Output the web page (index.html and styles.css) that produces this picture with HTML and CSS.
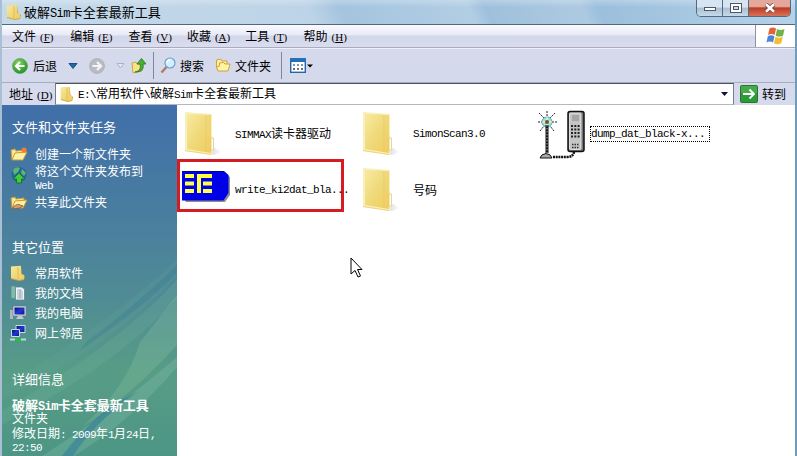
FILE: index.html
```html
<!DOCTYPE html>
<html lang="zh-CN">
<head>
  <meta charset="UTF-8" />
  <title>破解Sim卡全套最新工具</title>
  <link rel="stylesheet" href="styles.css">
</head>
<body>

  <!-- Shared icons -->
  <svg class="defs" width="0" height="0">
    <defs>
      <linearGradient id="gold" x1="0" y1="0" x2="1" y2="1">
        <stop offset="0" stop-color="#f8eaa0"/>
        <stop offset=".5" stop-color="#efd97a"/>
        <stop offset="1" stop-color="#f2cc5c"/>
      </linearGradient>
      <linearGradient id="shade" x1="0" y1="0" x2="1" y2="0">
        <stop offset="0" stop-color="#b9bcc8"/>
        <stop offset="1" stop-color="#fff"/>
      </linearGradient>
      <radialGradient id="green" cx=".4" cy=".3" r=".8">
        <stop offset="0" stop-color="#83d467"/>
        <stop offset="1" stop-color="#168a1c"/>
      </radialGradient>
      <linearGradient id="screen" x1="0" y1="0" x2="1" y2="1">
        <stop offset="0" stop-color="#000e78"/>
        <stop offset=".5" stop-color="#2038d0"/>
        <stop offset="1" stop-color="#0a168c"/>
      </linearGradient>
      <symbol id="folder" viewBox="0 0 48 48">
        <path d="M18 41l14 4 8-3-7-4z" fill="url(#shade)"/>
        <path d="M3 2l27 2v22l1 2v13l-2 4L3 41z" fill="#f9efb8"/>
        <path d="M5 4l24 1v38L5 39z" fill="url(#gold)"/>
        <path d="M24 5v37" stroke="#e3ca69" stroke-width=".7"/>
        <path d="M3 40.500l26 4" stroke="#efd57f" stroke-width="1"/>
        <path d="M29 28h2.500v12H29z" fill="#fffdf0" stroke="#dcc678" stroke-width=".7"/>
      </symbol>
      <symbol id="folder-small" viewBox="0 0 16 16">
        <path d="M1 2l10-1 1 8 3 2-1 4-5 1-8-2z" fill="#cba64b"/>
        <path d="M1 1.500l10-.8v8.300l3 1v4L9 15l-8-2z" fill="url(#gold)"/>
        <path d="M8 2v12" stroke="#dcb75a" stroke-width=".8"/>
      </symbol>
      <symbol id="folder-open" viewBox="0 0 18 16">
        <path d="M2 14L1 4l4-1 1 2 8-1v3" fill="#f8e69a" stroke="#c79a34"/>
        <path d="M2 14l3-7 12-1-4 8z" fill="#fff0a8" stroke="#c79a34"/>
      </symbol>
    </defs>
  </svg>

  <div class="window">

    <div class="title-bar">
      <svg class="title-icon" width="16" height="16"><use href="#folder-small"/></svg>
      <span class="title-text">破解<span class="en">Sim</span>卡全套最新工具</span>
      <div class="controls">
        <div class="control min"><svg width="14" height="8" viewBox="0 0 14 8"><rect x="1.500" y="3.500" width="11" height="3" fill="#fff" stroke="#4a5a6c"/></svg></div>
        <div class="control max"><svg width="12" height="10" viewBox="0 0 12 10"><rect x=".5" y=".5" width="11" height="9" fill="#fff" stroke="#4a5a6c"/><rect x="3.500" y="3.500" width="5" height="3" fill="#cbd9e6" stroke="#4a5a6c"/></svg></div>
        <div class="control close"><svg width="12" height="10" viewBox="0 0 12 10"><path d="M2 1.200l8 7.600M10 1.200L2 8.800" stroke="#6b3030" stroke-width="4"/><path d="M2 1.200l8 7.600M10 1.200L2 8.800" stroke="#fff" stroke-width="2.600"/></svg></div>
      </div>
    </div>

    <div class="menu-bar">
      <div class="menu">
        <span>文件<span class="key">(<u>F</u>)</span></span>
        <span>编辑<span class="key">(<u>E</u>)</span></span>
        <span>查看<span class="key">(<u>V</u>)</span></span>
        <span>收藏<span class="key">(<u>A</u>)</span></span>
        <span>工具<span class="key">(<u>T</u>)</span></span>
        <span>帮助<span class="key">(<u>H</u>)</span></span>
      </div>
      <div class="flag">
        <svg width="20" height="18" viewBox="0 0 20 18">
          <path d="M3.500 1.500q3-2 6.500 0L8.700 8q-3.500-1.800-6.700 0z" fill="#e8603a"/>
          <path d="M11 2q3.500 1.800 7.500 0L17 8.700q-4 1.800-7.300 0z" fill="#72b347"/>
          <path d="M1.800 9.200q3.200-2 6.700 0L7 15.500q-3-2-6.500 0z" fill="#4a86d8"/>
          <path d="M9.500 9.800q3.500 1.800 7.300 0l-1.500 6.500q-4 1.700-7.300 0z" fill="#f4bd34"/>
        </svg>
      </div>
    </div>

    <div class="toolbar">
      <svg class="back" width="16" height="16" viewBox="0 0 16 16">
        <circle cx="8" cy="8" r="7.500" fill="url(#green)" stroke="#4c9b40" stroke-width=".6"/>
        <path d="M12.500 8H4.500M8 4L4 8l4 4" fill="none" stroke="#fff" stroke-width="2.200"/>
      </svg>
      <span class="back-text">后退</span>
      <svg class="drop" width="10" height="6" viewBox="0 0 10 6"><path d="M1 .5h8L5 5.500z" fill="#1d6aa5" stroke="#1a4f86"/></svg>
      <svg class="forward" width="16" height="16" viewBox="0 0 16 16">
        <circle cx="8" cy="8" r="7.500" fill="#b9bbc3" stroke="#a5a7b0" stroke-width=".6"/>
        <path d="M3.500 8h8M8 4l4 4-4 4" fill="none" stroke="#f4f4fa" stroke-width="2.200"/>
      </svg>
      <svg class="drop2" width="9" height="6" viewBox="0 0 9 6"><path d="M1 .5h7L4.500 5z" fill="#e4e7f4" stroke="#a9b3c8"/></svg>
      <svg class="up" width="15" height="16" viewBox="0 0 15 16">
        <path d="M1 5l4-1 1 2 5 0v7l-9 2z" fill="#f8e388" stroke="#cfa545"/>
        <path d="M4 14c5-1 6-4 5-8H6l4.500-5.500L15 6h-3c1 5-1 8-8 8z" fill="#4caf35" stroke="#23761d" stroke-width=".8"/>
      </svg>
      <i class="divider"></i>
      <svg class="search" width="16" height="17" viewBox="0 0 16 17">
        <path d="M1.500 15.500L6.500 10" stroke="#b5785c" stroke-width="2.400"/>
        <circle cx="10" cy="6" r="5" fill="#d4effc" stroke="#6e9ed2" stroke-width="1.200"/>
        <path d="M7 6q0-3 3-3" fill="none" stroke="#fff" stroke-width="1.500"/>
      </svg>
      <span class="search-text">搜索</span>
      <svg class="folders" width="16" height="15" viewBox="0 0 16 15">
        <path d="M1.500 10V2l4-1 1.500 2h5v3" fill="#fbeea0" stroke="#d0a23a"/>
        <path d="M3 13L1.500 9l3-1V5l4-.5L10 6h5l-2 7z" fill="#fff3a5" stroke="#d0a23a"/>
      </svg>
      <span>文件夹</span>
      <i class="divider second"></i>
      <svg class="views" width="16" height="15" viewBox="0 0 16 15">
        <rect x=".7" y=".7" width="14.600" height="13.600" fill="#fff" stroke="#2465a8" stroke-width="1.400"/>
        <path d="M0 0h16v4H0z" fill="#2670b5"/>
        <path d="M3 6h2v2H3zM7 6h2v2H7zM11 6h2v2h-2z" fill="#7d9bb4"/>
        <path d="M3 10h2v2H3zM11 10h2v2h-2z" fill="#4b768e"/><path d="M7 10h2v2H7z" fill="#a6684c"/>
      </svg>
      <svg width="6" height="4" viewBox="0 0 6 4"><path d="M0 .5h6L3 3.500z" fill="#000"/></svg>
    </div>

    <div class="address-bar">
      <span class="address-label">地址<span class="key">(<u>D</u>)</span></span>
      <div class="address">
        <svg width="14" height="16" viewBox="0 0 16 16" preserveAspectRatio="none"><use href="#folder-small"/></svg>
        <span class="path"><span class="en">E:\</span>常用软件<span class="en">\</span>破解<span class="en">Sim</span>卡全套最新工具</span>
        <svg class="address-drop" width="7" height="4" viewBox="0 0 7 4"><path d="M0 0h7L3.500 4z" fill="#10103c"/></svg>
      </div>
      <svg class="go" width="18" height="18" viewBox="0 0 18 18">
        <rect x=".5" y=".5" width="17" height="17" rx="1" fill="#2c9a38" stroke="#2b7434"/>
        <path d="M1 1h16v7H1z" fill="#58b65a" opacity=".6"/>
        <path d="M3 9h11M9.500 4.500L14 9l-4.500 4.500" fill="none" stroke="#fff" stroke-width="1.800"/>
      </svg>
      <span>转到</span>
    </div>

    <div class="content">
      <div class="sidebar">
        <svg class="swoosh" width="175" height="351" viewBox="0 0 175 351">
          <path d="M175 155Q105 220 0 282v13Q110 240 175 171z" fill="#6aa8a0" opacity=".18"/>
          <path d="M175 175Q110 245 0 305v15Q120 256 175 193z" fill="#78b79e" opacity=".2"/>
          <path d="M175 160Q130 204 85 236l-8 10q60-40 98-78z" fill="#29738f" opacity=".25"/>
          <path d="M138 237L175 190v50q-45 50-95 82 45-40 58-85z" fill="#8cc7a0" opacity=".28"/>
          <path d="M175 252Q120 300 40 351h32Q130 315 175 262z" fill="#8fc8b5" opacity=".25"/>
          <path d="M135 287Q95 305 60 351h11q20-32 64-64z" fill="#25729d" opacity=".45"/>
        </svg>

        <h3>文件和文件夹任务</h3>
        <ul class="tasks">
          <li>
            <svg width="18" height="16" viewBox="0 0 18 16"><use href="#folder-open"/><circle cx="14" cy="4" r="2.600" fill="#f27d35"/></svg>
            <span>创建一个新文件夹</span>
          </li>
          <li class="publish">
            <svg width="18" height="18" viewBox="0 0 18 18">
              <circle cx="9" cy="8.500" r="7.500" fill="#24669d"/>
              <path d="M3 4q3-4 7-2l-2 4-4 3zM12 3l4 4-2 3-3-3z" fill="#5bb869"/>
              <path d="M9 7l6 6h-3.500v4h-5v-4H3z" fill="#41c83e" stroke="#126a27" stroke-width=".8"/>
            </svg>
            <span>将这个文件夹发布到<br><span class="en">Web</span></span>
          </li>
          <li>
            <svg width="18" height="16" viewBox="0 0 18 16"><use href="#folder-open"/><path d="M3 13q5-4 7-2l3 1-3 2-7 1z" fill="#d99c65" stroke="#744d2d" stroke-width=".7"/></svg>
            <span>共享此文件夹</span>
          </li>
        </ul>

        <h3>其它位置</h3>
        <ul class="places">
          <li>
            <svg width="16" height="16"><use href="#folder-small"/></svg>
            <span>常用软件</span>
          </li>
          <li>
            <svg width="16" height="16" viewBox="0 0 16 16">
              <path d="M1 1h5v13l-5-1z" fill="#7fbda9" stroke="#58887f" stroke-width=".6"/>
              <path d="M5.500 2h6l3 2v11h-9z" fill="#f1f5f7" stroke="#668090" stroke-width=".8"/>
              <path d="M7 5h5M7 7h6M7 9h6M7 11h6M7 13h6M10 5v8" stroke="#8ca1af" stroke-width=".8"/>
            </svg>
            <span>我的文档</span>
          </li>
          <li>
            <svg width="16" height="16" viewBox="0 0 16 16">
              <path d="M0 5h3v9H0z" fill="#aeb8c0"/>
              <path d="M3 1h13v10H3z" fill="#d9dcdf" stroke="#676f80" stroke-width=".6"/>
              <path d="M4.500 2.500h10v7h-10z" fill="url(#screen)"/>
              <path d="M8 11h4l2 3H6z" fill="#c2c8cc"/>
            </svg>
            <span>我的电脑</span>
          </li>
          <li>
            <svg width="16" height="16" viewBox="0 0 16 16">
              <path d="M6 .5h9v7H6z" fill="url(#screen)" stroke="#d2d9e5"/>
              <path d="M1.500 4.500h8v7h-8z" fill="url(#screen)" stroke="#d2d9e5"/>
              <path d="M0 14.500h16" stroke="#b9d9d5" stroke-width="2"/><path d="M5 14.500h6" stroke="#26bd4a" stroke-width="3"/>
            </svg>
            <span>网上邻居</span>
          </li>
        </ul>

        <h3>详细信息</h3>
        <div class="details">
          <b>破解<span class="en">Sim</span>卡全套最新工具</b>
          <p>文件夹</p>
          <p class="date">修改日期<span class="en">: 2009</span>年<span class="en">1</span>月<span class="en">24</span>日<span class="en">,<br>22:50</span></p>
        </div>
      </div>

      <div class="files">
        <div class="file">
          <svg width="48" height="48"><use href="#folder"/></svg>
          <span class="name"><span class="en">SIMMAX</span>读卡器驱动</span>
        </div>
        <div class="file">
          <svg width="48" height="48"><use href="#folder"/></svg>
          <span class="name en">SimonScan3.0</span>
        </div>
        <div class="file">
          <svg width="48" height="48" viewBox="0 0 48 48">
            <path d="M9 1v8M9 16v6M1 3l5 5M17 3l-5 5M0 12h4M14 12h5M2 21l4-5M16 21l-4-5" stroke="#222" stroke-dasharray="2 1"/>
            <circle cx="9" cy="12" r="5" fill="#a9ded8" stroke="#55a8a3"/>
            <path d="M9 7v10M4 12h10" stroke="#e2ffff"/>
            <circle cx="9" cy="12" r="2" fill="#72541c"/>
            <path d="M9 15v28" stroke="#111" stroke-width="3"/>
            <path d="M9 15v28" stroke="#aaa" stroke-dasharray="1.500 1.500"/>
            <path d="M15 47h14q6 0 7-5" fill="none" stroke="#111" stroke-width="2.500" stroke-dasharray="2 .7"/>
            <path d="M2 48q1-4 6-4.500 5 .5 6 4.500z" fill="#aaa" stroke="#111"/>
            <rect x="30" y="1.500" width="16" height="40" rx="2" fill="#777" stroke="#111" stroke-width="1.500"/>
            <rect x="31.500" y="3" width="11.500" height="36.500" rx="1" fill="#c5c5c5" stroke="#eee" stroke-width=".8"/>
            <path d="M34 6h7M34 8h7M34 10h7" stroke="#777" stroke-width=".8"/>
            <path d="M33 16h9.500M33 19.500h9.500M33 23h9.500M33 26.500h9.500" stroke="#222" stroke-width="2" stroke-dasharray="2 1.300"/>
            <path d="M34 34.500h7M34 37.500h7" stroke="#333" stroke-width="1.500" stroke-dasharray="1.500 1"/>
          </svg>
          <span class="name en focused">dump_dat_black-x...</span>
        </div>
        <div class="file marked">
          <svg width="48" height="48" viewBox="0 0 48 48">
            <path d="M2 7h41l5 4v18l-5 7H4l-2-3z" fill="#8b8b91"/>
            <path d="M0 5h42l4.500 4v18l-5 7.500H0z" fill="#0000e8"/>
            <path d="M0 5.500h42" stroke="#000092"/>
            <path d="M3 8h9v4H3zM3 15.500h9v4H3zM3 23h9v4H3zM15 8h15v4H19v15h-4zM21 15.500h9v4h-9zM21 23h9v4h-9z" fill="#ffff4a"/>
          </svg>
          <span class="name en">write_ki2dat_bla...</span>
        </div>
        <div class="file">
          <svg width="48" height="48"><use href="#folder"/></svg>
          <span class="name">号码</span>
        </div>

        <svg class="cursor" width="14" height="22" viewBox="0 0 14 22">
          <path d="M1 1v16l4-3.500L8 20l2.500-1-3-6.500H12z" fill="#fff" stroke="#000"/>
        </svg>
      </div>
    </div>
  </div>

</body>
</html>
```
FILE: styles.css
```css
body {
  margin: 0;
  font-family: "Noto Sans CJK SC", sans-serif;
  font-size: 12px;
  line-height: 14px;
  color: #000;
}

.defs {
  position: absolute;
}

.window {
  display: flex;
  flex-direction: column;
  box-sizing: border-box;
  width: 797px;
  height: 456px;
  overflow: hidden;
  border-left: 2px solid #a9bfd3;
  border-right: 2px solid #6f9cba;
  background: #d6daed;
}

svg {
  display: block;
  flex-shrink: 0;
}

/* half-width latin letters, 6px each */
.en {
  font-family: "Liberation Mono", monospace;
  font-size: 11px;
  letter-spacing: -0.6px;
}

.key {
  margin-left: 4px;
  font-family: "Liberation Serif", serif;
  font-size: 11px;
}

/* title bar */
.title-bar {
  display: flex;
  height: 24px;
  padding-left: 4px;
  background: linear-gradient(to bottom, rgba(255,255,255,0.25), rgba(255,255,255,0) 30%),
    linear-gradient(65deg, #c4d9ea 0, #bdd3e7 39%, #a4c4df 43%, #b2cee4 59%, #9fc0dc 61%, #adcae1 73%, #9bbfdc 75%, #b6d2e7 100%);
  border-bottom: 1px solid #54677b;
}

.title-icon {
  margin-top: 4px;
}

.title-text {
  margin: 5px 0 0 2px;
  font-size: 13px;
}

.title-text .en,
.details b .en {
  font-size: 12px;
}

.controls {
  display: flex;
  width: 93px;
  height: 16px;
  margin: 0 4px 0 auto;
  border: 1px solid #536b82;
  border-top: none;
  border-radius: 0 0 5px 5px;
  overflow: hidden;
}

.control {
  display: flex;
  align-items: center;
  justify-content: center;
  width: 25px;
  border-right: 1px solid #536b82;
  background: linear-gradient(#d7e5f0 45%, #a9bed1 50%, #c6dbe9);
}

.close {
  flex: 1;
  border-right: none;
  background: linear-gradient(#e4a79b 40%, #bd3b2a 50%, #d97156);
}

/* menu */
.menu-bar {
  display: flex;
  justify-content: space-between;
  height: 22px;
  background: linear-gradient(#fafaff, #e8eaf7 45%, #d2d6e9 50%, #d9ddef);
  border-bottom: 1px solid #a9adbb;
}

.menu {
  display: flex;
  padding: 4px 0 0 10px;
}

.menu > span {
  width: 58.300px;
  white-space: nowrap;
}

.flag {
  display: flex;
  align-items: center;
  justify-content: center;
  width: 39px;
  background: #fff;
  border-left: 1px solid #8d91a0;
}

/* toolbar */
.toolbar {
  display: flex;
  align-items: center;
  height: 33px;
  padding-left: 10px;
  border-top: 1px solid #eef0f9;
  border-bottom: 1px solid #a9adbb;
  background: #d5d9ec;
}

.back-text { margin-left: 5px; }
.drop { margin-left: 11px; }
.forward { margin-left: 11px; }
.drop2 { margin-left: 11px; }
.up { margin-left: 6px; }

.divider {
  width: 1px;
  height: 27px;
  margin: 0 6px 0 7px;
  background: #82869a;
}

.search-text { margin-left: 4px; }
.folders { margin: 0 4px 0 11px; }
.divider.second { margin: 0 8px 0 10px; }
.views { margin-right: 1px; }

/* address */
.address-bar {
  display: flex;
  align-items: center;
  height: 22px;
  padding-left: 7px;
}

.address-label {
  width: 46px;
  white-space: nowrap;
}

.address {
  display: flex;
  align-items: center;
  box-sizing: border-box;
  width: 679px;
  height: 22px;
  padding: 0 5px 0 4px;
  background: #fff;
  border: 1px solid #777b8b;
  border-top-color: #4d5263;
  border-bottom-color: #b5b7bf;
}

.path {
  margin-left: 4px;
}

.address-drop {
  margin-left: auto;
}

.go {
  margin: 0 4px 0 6px;
}

/* content */
.content {
  display: flex;
  flex: 1;
  min-height: 0;
}

.sidebar {
  position: relative;
  box-sizing: border-box;
  width: 175px;
  padding: 14px 0 0 10px;
  overflow: hidden;
  color: #fff;
  background: linear-gradient(#406fa9, #4a7e9f 32%, #508c94 56%, #579c86 76%, #4d9685);
}

.swoosh {
  position: absolute;
  left: 0;
  top: 0;
}

.sidebar h3,
.sidebar ul,
.details {
  position: relative;
}

.sidebar h3 {
  margin: 0;
  font-size: 13px;
  font-weight: normal;
  line-height: 16px;
}

.sidebar ul {
  box-sizing: border-box;
  margin: 0;
  padding: 0;
  list-style: none;
}

.sidebar li {
  display: flex;
  align-items: center;
  gap: 7px;
}

.sidebar .tasks {
  height: 104px;
  padding-top: 10px;
}

.tasks li {
  height: 18px;
  margin-left: -2px;
}

.tasks .publish {
  height: 30px;
  line-height: 13px;
}

.tasks .publish svg {
  margin-top: -6px;
}

.sidebar .places {
  height: 116px;
  padding-top: 8px;
}

.places li {
  height: 20px;
  margin-left: -2px;
  gap: 9px;
}

.details {
  padding-top: 11px;
  line-height: 13px;
}

.details .en {
  line-height: 0;
}

.details b {
  display: block;
  font-size: 13px;
}

.details p {
  margin: 0;
}

.details .date {
  margin-top: 2px;
}

/* files */
.files {
  position: relative;
  display: grid;
  grid-template-columns: repeat(3, 178px);
  grid-auto-rows: 56px;
  align-content: start;
  flex: 1;
  padding: 1px 0 0 5px;
  background: #fff;
}

.file {
  position: relative;
  display: flex;
  align-items: center;
}

.file svg {
  overflow: visible;
}

.name {
  position: relative;
  z-index: 1;
  margin: 0 0 0 5px;
  white-space: nowrap;
}

.focused {
  padding-right: 4px;
  outline: 1px dotted #000;
}

/* red frame over the sim card tile */
.marked::before {
  content: "";
  position: absolute;
  left: -5px;
  top: -3px;
  width: 161px;
  height: 47px;
  border: 3px solid #d51c22;
}

.cursor {
  position: absolute;
  left: 173px;
  top: 152px;
}
```
